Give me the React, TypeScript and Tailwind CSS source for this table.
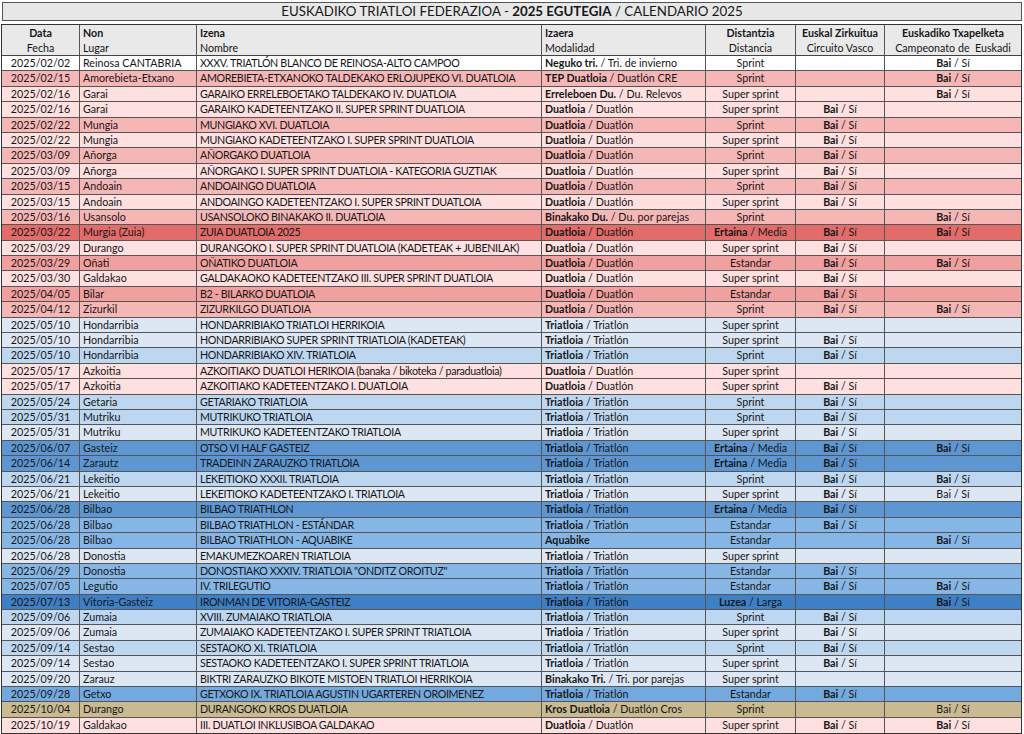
import React from 'react';

type Row = {
  date: string;
  place: string;
  name: string;
  modB: string;
  modN?: string;
  distB?: string;
  dist: string;
  circ?: boolean;
  champ?: boolean;
  champPlain?: boolean;
  bg: string;
};

const W = 'bg-white';
const PL = 'bg-[#fde0df]';
const PM = 'bg-[#f5b7b6]';
const PD = 'bg-[#efa09f]';
const PR = 'bg-[#e26c69]';
const BL = 'bg-[#dde6f3]';
const BM = 'bg-[#bdd7f0]';
const BB = 'bg-[#86b6e5]';
const BS = 'bg-[#5e96d2]';
const BD = 'bg-[#3d80c6]';
const KH = 'bg-[#c9ba91]';

const rows: Row[] = [
  { date: '2025/02/02', place: 'Reinosa CANTABRIA', name: 'XXXV. TRIATLÓN BLANCO DE REINOSA-ALTO CAMPOO', modB: 'Neguko tri.', modN: 'Tri. de invierno', dist: 'Sprint', champ: true, bg: W },
  { date: '2025/02/15', place: 'Amorebieta-Etxano', name: 'AMOREBIETA-ETXANOKO TALDEKAKO ERLOJUPEKO VI. DUATLOIA', modB: 'TEP Duatloia', modN: 'Duatlón CRE', dist: 'Sprint', champ: true, bg: PM },
  { date: '2025/02/16', place: 'Garai', name: 'GARAIKO ERRELEBOETAKO TALDEKAKO IV. DUATLOIA', modB: 'Erreleboen Du.', modN: 'Du. Relevos', dist: 'Super sprint', champ: true, bg: PL },
  { date: '2025/02/16', place: 'Garai', name: 'GARAIKO KADETEENTZAKO II. SUPER SPRINT DUATLOIA', modB: 'Duatloia', modN: 'Duatlón', dist: 'Super sprint', circ: true, bg: PL },
  { date: '2025/02/22', place: 'Mungia', name: 'MUNGIAKO XVI. DUATLOIA', modB: 'Duatloia', modN: 'Duatlón', dist: 'Sprint', circ: true, bg: PM },
  { date: '2025/02/22', place: 'Mungia', name: 'MUNGIAKO KADETEENTZAKO I. SUPER SPRINT DUATLOIA', modB: 'Duatloia', modN: 'Duatlón', dist: 'Super sprint', circ: true, bg: PL },
  { date: '2025/03/09', place: 'Añorga', name: 'AÑORGAKO DUATLOIA', modB: 'Duatloia', modN: 'Duatlón', dist: 'Sprint', circ: true, bg: PM },
  { date: '2025/03/09', place: 'Añorga', name: 'AÑORGAKO I. SUPER SPRINT DUATLOIA - KATEGORIA GUZTIAK', modB: 'Duatloia', modN: 'Duatlón', dist: 'Super sprint', circ: true, bg: PL },
  { date: '2025/03/15', place: 'Andoain', name: 'ANDOAINGO DUATLOIA', modB: 'Duatloia', modN: 'Duatlón', dist: 'Sprint', circ: true, bg: PM },
  { date: '2025/03/15', place: 'Andoain', name: 'ANDOAINGO KADETEENTZAKO I. SUPER SPRINT DUATLOIA', modB: 'Duatloia', modN: 'Duatlón', dist: 'Super sprint', circ: true, bg: PL },
  { date: '2025/03/16', place: 'Usansolo', name: 'USANSOLOKO BINAKAKO II. DUATLOIA', modB: 'Binakako Du.', modN: 'Du. por parejas', dist: 'Sprint', champ: true, bg: PM },
  { date: '2025/03/22', place: 'Murgia (Zuia)', name: 'ZUIA DUATLOIA 2025', modB: 'Duatloia', modN: 'Duatlón', distB: 'Ertaina', dist: 'Media', circ: true, champ: true, bg: PR },
  { date: '2025/03/29', place: 'Durango', name: 'DURANGOKO I. SUPER SPRINT DUATLOIA (KADETEAK + JUBENILAK)', modB: 'Duatloia', modN: 'Duatlón', dist: 'Super sprint', circ: true, bg: PL },
  { date: '2025/03/29', place: 'Oñati', name: 'OÑATIKO DUATLOIA', modB: 'Duatloia', modN: 'Duatlón', dist: 'Estandar', circ: true, champ: true, bg: PD },
  { date: '2025/03/30', place: 'Galdakao', name: 'GALDAKAOKO KADETEENTZAKO III. SUPER SPRINT DUATLOIA', modB: 'Duatloia', modN: 'Duatlón', dist: 'Super sprint', circ: true, bg: PL },
  { date: '2025/04/05', place: 'Bilar', name: 'B2 - BILARKO DUATLOIA', modB: 'Duatloia', modN: 'Duatlón', dist: 'Estandar', circ: true, bg: PD },
  { date: '2025/04/12', place: 'Zizurkil', name: 'ZIZURKILGO DUATLOIA', modB: 'Duatloia', modN: 'Duatlón', dist: 'Sprint', circ: true, champ: true, bg: PM },
  { date: '2025/05/10', place: 'Hondarribia', name: 'HONDARRIBIAKO TRIATLOI HERRIKOIA', modB: 'Triatloia', modN: 'Triatlón', dist: 'Super sprint', bg: BL },
  { date: '2025/05/10', place: 'Hondarribia', name: 'HONDARRIBIAKO SUPER SPRINT TRIATLOIA (KADETEAK)', modB: 'Triatloia', modN: 'Triatlón', dist: 'Super sprint', circ: true, bg: BL },
  { date: '2025/05/10', place: 'Hondarribia', name: 'HONDARRIBIAKO XIV. TRIATLOIA', modB: 'Triatloia', modN: 'Triatlón', dist: 'Sprint', circ: true, bg: BM },
  { date: '2025/05/17', place: 'Azkoitia', name: 'AZKOITIAKO DUATLOI HERIKOIA (banaka / bikoteka / paraduatloia)', modB: 'Duatloia', modN: 'Duatlón', dist: 'Super sprint', bg: PL },
  { date: '2025/05/17', place: 'Azkoitia', name: 'AZKOITIAKO KADETEENTZAKO I. DUATLOIA', modB: 'Duatloia', modN: 'Duatlón', dist: 'Super sprint', circ: true, bg: PL },
  { date: '2025/05/24', place: 'Getaria', name: 'GETARIAKO TRIATLOIA', modB: 'Triatloia', modN: 'Triatlón', dist: 'Sprint', circ: true, bg: BM },
  { date: '2025/05/31', place: 'Mutriku', name: 'MUTRIKUKO TRIATLOIA', modB: 'Triatloia', modN: 'Triatlón', dist: 'Sprint', circ: true, bg: BM },
  { date: '2025/05/31', place: 'Mutriku', name: 'MUTRIKUKO KADETEENTZAKO TRIATLOIA', modB: 'Triatloia', modN: 'Triatlón', dist: 'Super sprint', circ: true, bg: BL },
  { date: '2025/06/07', place: 'Gasteiz', name: 'OTSO VI HALF GASTEIZ', modB: 'Triatloia', modN: 'Triatlón', distB: 'Ertaina', dist: 'Media', circ: true, champ: true, bg: BS },
  { date: '2025/06/14', place: 'Zarautz', name: 'TRADEINN ZARAUZKO TRIATLOIA', modB: 'Triatloia', modN: 'Triatlón', distB: 'Ertaina', dist: 'Media', circ: true, bg: BS },
  { date: '2025/06/21', place: 'Lekeitio', name: 'LEKEITIOKO XXXII. TRIATLOIA', modB: 'Triatloia', modN: 'Triatlón', dist: 'Sprint', circ: true, champ: true, bg: BM },
  { date: '2025/06/21', place: 'Lekeitio', name: 'LEKEITIOKO KADETEENTZAKO I. TRIATLOIA', modB: 'Triatloia', modN: 'Triatlón', dist: 'Super sprint', circ: true, champ: true, champPlain: true, bg: BL },
  { date: '2025/06/28', place: 'Bilbao', name: 'BILBAO TRIATHLON', modB: 'Triatloia', modN: 'Triatlón', distB: 'Ertaina', dist: 'Media', circ: true, bg: BS },
  { date: '2025/06/28', place: 'Bilbao', name: 'BILBAO TRIATHLON - ESTÁNDAR', modB: 'Triatloia', modN: 'Triatlón', dist: 'Estandar', circ: true, bg: BB },
  { date: '2025/06/28', place: 'Bilbao', name: 'BILBAO TRIATHLON - AQUABIKE', modB: 'Aquabike', dist: 'Estandar', champ: true, bg: BB },
  { date: '2025/06/28', place: 'Donostia', name: 'EMAKUMEZKOAREN TRIATLOIA', modB: 'Triatloia', modN: 'Triatlón', dist: 'Super sprint', bg: BL },
  { date: '2025/06/29', place: 'Donostia', name: 'DONOSTIAKO XXXIV. TRIATLOIA "ONDITZ OROITUZ"', modB: 'Triatloia', modN: 'Triatlón', dist: 'Estandar', circ: true, bg: BB },
  { date: '2025/07/05', place: 'Legutio', name: 'IV. TRILEGUTIO', modB: 'Triatloia', modN: 'Triatlón', dist: 'Estandar', circ: true, champ: true, bg: BB },
  { date: '2025/07/13', place: 'Vitoria-Gasteiz', name: 'IRONMAN DE VITORIA-GASTEIZ', modB: 'Triatloia', modN: 'Triatlón', distB: 'Luzea', dist: 'Larga', champ: true, bg: BD },
  { date: '2025/09/06', place: 'Zumaia', name: 'XVIII. ZUMAIAKO TRIATLOIA', modB: 'Triatloia', modN: 'Triatlón', dist: 'Sprint', circ: true, bg: BM },
  { date: '2025/09/06', place: 'Zumaia', name: 'ZUMAIAKO KADETEENTZAKO I. SUPER SPRINT TRIATLOIA', modB: 'Triatloia', modN: 'Triatlón', dist: 'Super sprint', circ: true, bg: BL },
  { date: '2025/09/14', place: 'Sestao', name: 'SESTAOKO XI. TRIATLOIA', modB: 'Triatloia', modN: 'Triatlón', dist: 'Sprint', circ: true, bg: BM },
  { date: '2025/09/14', place: 'Sestao', name: 'SESTAOKO KADETEENTZAKO I. SUPER SPRINT TRIATLOIA', modB: 'Triatloia', modN: 'Triatlón', dist: 'Super sprint', circ: true, bg: BL },
  { date: '2025/09/20', place: 'Zarauz', name: 'BIKTRI ZARAUZKO BIKOTE MISTOEN TRIATLOI HERRIKOIA', modB: 'Binakako Tri.', modN: 'Tri. por parejas', dist: 'Super sprint', bg: BL },
  { date: '2025/09/28', place: 'Getxo', name: 'GETXOKO IX. TRIATLOIA AGUSTIN UGARTEREN OROIMENEZ', modB: 'Triatloia', modN: 'Triatlón', dist: 'Estandar', circ: true, bg: 'bg-[#74a9df]' },
  { date: '2025/10/04', place: 'Durango', name: 'DURANGOKO KROS DUATLOIA', modB: 'Kros Duatloia', modN: 'Duatlón Cros', dist: 'Sprint', champ: true, champPlain: true, bg: KH },
  { date: '2025/10/19', place: 'Galdakao', name: 'III. DUATLOI INKLUSIBOA GALDAKAO', modB: 'Duatloia', modN: 'Duatlón', dist: 'Super sprint', circ: true, champ: true, bg: PL },
];

const cols = 'grid grid-cols-[78px_117px_345px_164px_90px_89px_136px]';
const cell = 'border-r border-[#555] overflow-hidden whitespace-nowrap';

const Bai = ({ plain }: { plain?: boolean }) => (
  <span>
    <span className={plain ? '' : 'font-bold'}>Bai</span> / Sí
  </span>
);

export default function App() {
  return (
    <div
      className="w-[1024px] h-[734px] bg-white text-[#161616] overflow-hidden"
      style={{ fontFamily: 'Lato, "Open Sans", sans-serif' }}
    >
      <div className="ml-[2px] mt-[2px] w-[1020px] h-[19px] border border-[#555] bg-[#e7e7e7] flex items-center justify-center text-[13.3px] leading-none">
        <span>
          EUSKADIKO TRIATLOI FEDERAZIOA - <span className="font-bold">2025 EGUTEGIA</span> / CALENDARIO 2025
        </span>
      </div>

      <div className="ml-[1px] mt-[3px] w-[1021px] border border-[#333] text-[10.7px]">
        <div className={`${cols} h-[31px] bg-[#e9e9e9] border-b border-[#444] leading-[15px]`}>
          <div className={`${cell} text-center`}>
            <div className="font-bold">Data</div>
            <div>Fecha</div>
          </div>
          <div className={`${cell} pl-[3px]`}>
            <div className="font-bold">Non</div>
            <div>Lugar</div>
          </div>
          <div className={`${cell} pl-[3px]`}>
            <div className="font-bold">Izena</div>
            <div>Nombre</div>
          </div>
          <div className={`${cell} pl-[3px]`}>
            <div className="font-bold">Izaera</div>
            <div>Modalidad</div>
          </div>
          <div className={`${cell} text-center`}>
            <div className="font-bold">Distantzia</div>
            <div>Distancia</div>
          </div>
          <div className={`${cell} text-center`}>
            <div className="font-bold">Euskal Zirkuitua</div>
            <div>Circuito Vasco</div>
          </div>
          <div className="text-center whitespace-nowrap overflow-hidden">
            <div className="font-bold">Euskadiko Txapelketa</div>
            <div>Campeonato de&nbsp; Euskadi</div>
          </div>
        </div>

        {rows.map((r, i) => (
          <div
            key={i}
            className={`${cols} h-[15.4px] leading-[14.4px] ${r.bg} ${i < rows.length - 1 ? 'border-b border-[#555]' : ''}`}
          >
            <div className={`${cell} text-center`}>{r.date}</div>
            <div className={`${cell} pl-[3px]`}>{r.place}</div>
            <div className={`${cell} pl-[3px] tracking-[-0.35px]`}>{r.name}</div>
            <div className={`${cell} pl-[3px]`}>
              <span className="font-bold">{r.modB}</span>
              {r.modN ? ` / ${r.modN}` : ''}
            </div>
            <div className={`${cell} text-center`}>
              {r.distB ? (
                <>
                  <span className="font-bold">{r.distB}</span> / {r.dist}
                </>
              ) : (
                r.dist
              )}
            </div>
            <div className={`${cell} text-center`}>{r.circ ? <Bai /> : null}</div>
            <div className="text-center whitespace-nowrap overflow-hidden">
              {r.champ ? <Bai plain={r.champPlain} /> : null}
            </div>
          </div>
        ))}
      </div>
    </div>
  );
}
